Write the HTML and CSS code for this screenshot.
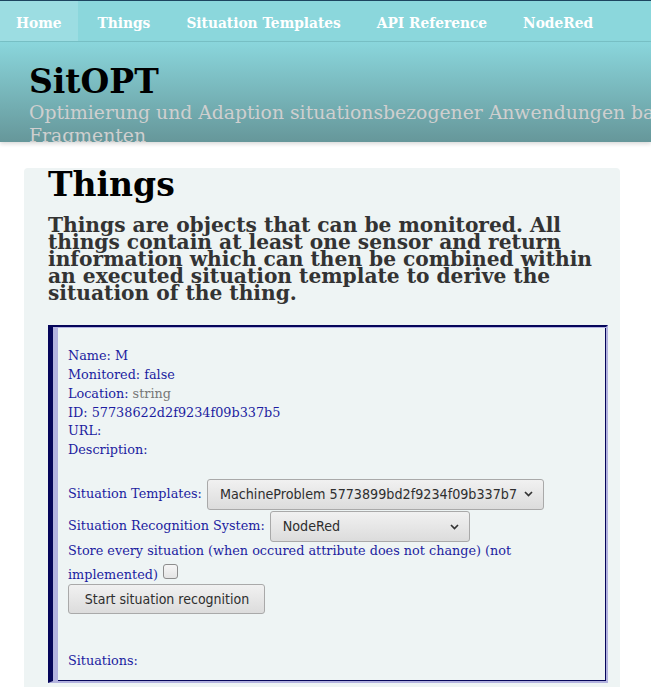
FILE: index.html
```html
<!DOCTYPE html>
<html lang="de">
<head>
<meta charset="utf-8">
<title>SitOPT - Things</title>
<link rel="stylesheet" href="styles.css">
</head>
<body>
<header class="site-header">
  <nav class="nav">
    <a class="nav-item active" href="#">Home</a>
    <a class="nav-item" href="#">Things</a>
    <a class="nav-item" href="#">Situation Templates</a>
    <a class="nav-item" href="#">API Reference</a>
    <a class="nav-item" href="#">NodeRed</a>
  </nav>
  <div class="hero">
    <div class="hero-inner">
      <h1 class="hero-title">SitOPT</h1>
      <p class="hero-sub">Optimierung und Adaption situationsbezogener Anwendungen basierend auf Workflow-Fragmenten</p>
    </div>
  </div>
</header>
<main class="content">
  <h1 class="page-title">Things</h1>
  <h3 class="lead">Things are objects that can be monitored. All things contain at least one sensor and return information which can then be combined within an executed situation template to derive the situation of the thing.</h3>
  <div class="thing">
    <div class="line">Name: M</div>
    <div class="line">Monitored: false</div>
    <div class="line">Location: <span class="muted">string</span></div>
    <div class="line">ID: 57738622d2f9234f09b337b5</div>
    <div class="line">URL:</div>
    <div class="line">Description:</div>
    <div class="line-gap"></div>
    <div class="field-row">
      <span class="field-label">Situation Templates:</span>
      <div class="select select-wide">
        <span class="select-text">MachineProblem 5773899bd2f9234f09b337b7</span>
        <svg class="chevron" width="9" height="6" viewBox="0 0 9 6"><path d="M1 1 L4.5 4.5 L8 1" fill="none" stroke="#333" stroke-width="1.7"/></svg>
      </div>
    </div>
    <div class="field-row field-row-2">
      <span class="field-label">Situation Recognition System:</span>
      <div class="select select-narrow">
        <span class="select-text">NodeRed</span>
        <svg class="chevron" width="9" height="6" viewBox="0 0 9 6"><path d="M1 1 L4.5 4.5 L8 1" fill="none" stroke="#333" stroke-width="1.7"/></svg>
      </div>
    </div>
    <div class="store-line">Store every situation (when occured attribute does not change) (not implemented) <span class="checkbox"></span></div>
    <div class="button-row"><button class="btn" type="button">Start situation recognition</button></div>
    <div class="situations">Situations:</div>
  </div>
</main>
</body>
</html>
```
FILE: styles.css
```css
html, body {
  margin: 0;
  padding: 0;
  background: #ffffff;
  font-family: "DejaVu Serif", serif;
  overflow-x: hidden;
}

.site-header {
  border-top: 1px solid #1d4560;
}

.nav {
  display: flex;
  gap: 4px;
  height: 40px;
  background: #8bd7dc;
  border-bottom: 1px solid #79c3c8;
}

.nav-item {
  display: flex;
  align-items: center;
  box-sizing: border-box;
  height: 40px;
  padding: 3px 16px 0;
  color: #ffffff;
  font-weight: bold;
  font-size: 15.3px;
  font-stretch: condensed;
  text-decoration: none;
}

.nav-item.active {
  background: #9cdde2;
}

.hero {
  height: 100px;
  overflow: hidden;
  background: linear-gradient(#8ad6dc, #66979a);
  box-shadow: 0 2px 4px rgba(0, 0, 0, 0.15);
}

.hero-inner {
  width: 940px;
  padding-left: 29px;
}

.hero-title {
  margin: 20px 0 0;
  font-size: 33px;
  line-height: 40px;
  color: #000000;
}

.hero-sub {
  margin: 0;
  font-size: 18.8px;
  line-height: 22.5px;
  color: #cfcfcf;
}

.content {
  margin: 26px 31px 0 24px;
  padding: 0 12px 4px 24px;
  background: #eef4f4;
  border-radius: 4px 4px 0 0;
}

.page-title {
  margin: 0;
  font-size: 33px;
  line-height: 34px;
  color: #000000;
}

.lead {
  margin: 15.2px 0 0;
  font-size: 20.2px;
  line-height: 17px;
  font-weight: bold;
  color: #333333;
}

.thing {
  margin-top: 22.5px;
  border-style: solid;
  border-width: 2px 2px 2px 5px;
  border-color: #05055a #b3b3df #b3b3df #05055a;
  box-shadow: inset 5px 1px 0 #b3b3df, inset -1px -1px 0 #05055a;
  padding: 20.6px 11px 11px 15px;
  color: #1c1ca0;
  font-size: 12.8px;
  line-height: 18.75px;
}

.muted {
  color: #777777;
}

.line-gap {
  height: 18.75px;
}

.field-row {
  display: flex;
  align-items: center;
}

.field-row-2 {
  margin-top: 1.5px;
}

.select {
  display: flex;
  align-items: center;
  justify-content: space-between;
  box-sizing: border-box;
  height: 31px;
  margin-left: 5px;
  padding: 0 10px 0 12px;
  border: 1px solid #a9a9a9;
  border-radius: 3px;
  background: linear-gradient(#f1f1f1, #dcdcdc);
  color: #2e2e2e;
  font-family: "DejaVu Sans", sans-serif;
  font-stretch: condensed;
  font-size: 14.2px;
  white-space: nowrap;
}

.select-text {
  flex: none;
}

.select-wide {
  width: 337px;
}

.select-narrow {
  width: 200px;
}

.chevron {
  flex: none;
  margin-left: 4px;
}

.store-line {
  line-height: 18.5px;
}

.checkbox {
  display: inline-block;
  box-sizing: border-box;
  width: 15px;
  height: 15px;
  margin: 3px 0 0 1px;
  border: 1px solid #8d8d8d;
  border-radius: 3px;
  background: linear-gradient(#f6f6f6, #e4e4e4);
}

.button-row {
  margin-top: 0;
}

.btn {
  display: block;
  box-sizing: border-box;
  width: 197px;
  height: 29.5px;
  padding: 0 0 0 1px;
  border: 1px solid #a9a9a9;
  border-radius: 3px;
  background: linear-gradient(#f1f1f1, #dcdcdc);
  color: #2e2e2e;
  font-family: "DejaVu Sans", sans-serif;
  font-stretch: condensed;
  font-size: 14px;
}

.situations {
  margin-top: 38px;
  line-height: 18.5px;
}
```
